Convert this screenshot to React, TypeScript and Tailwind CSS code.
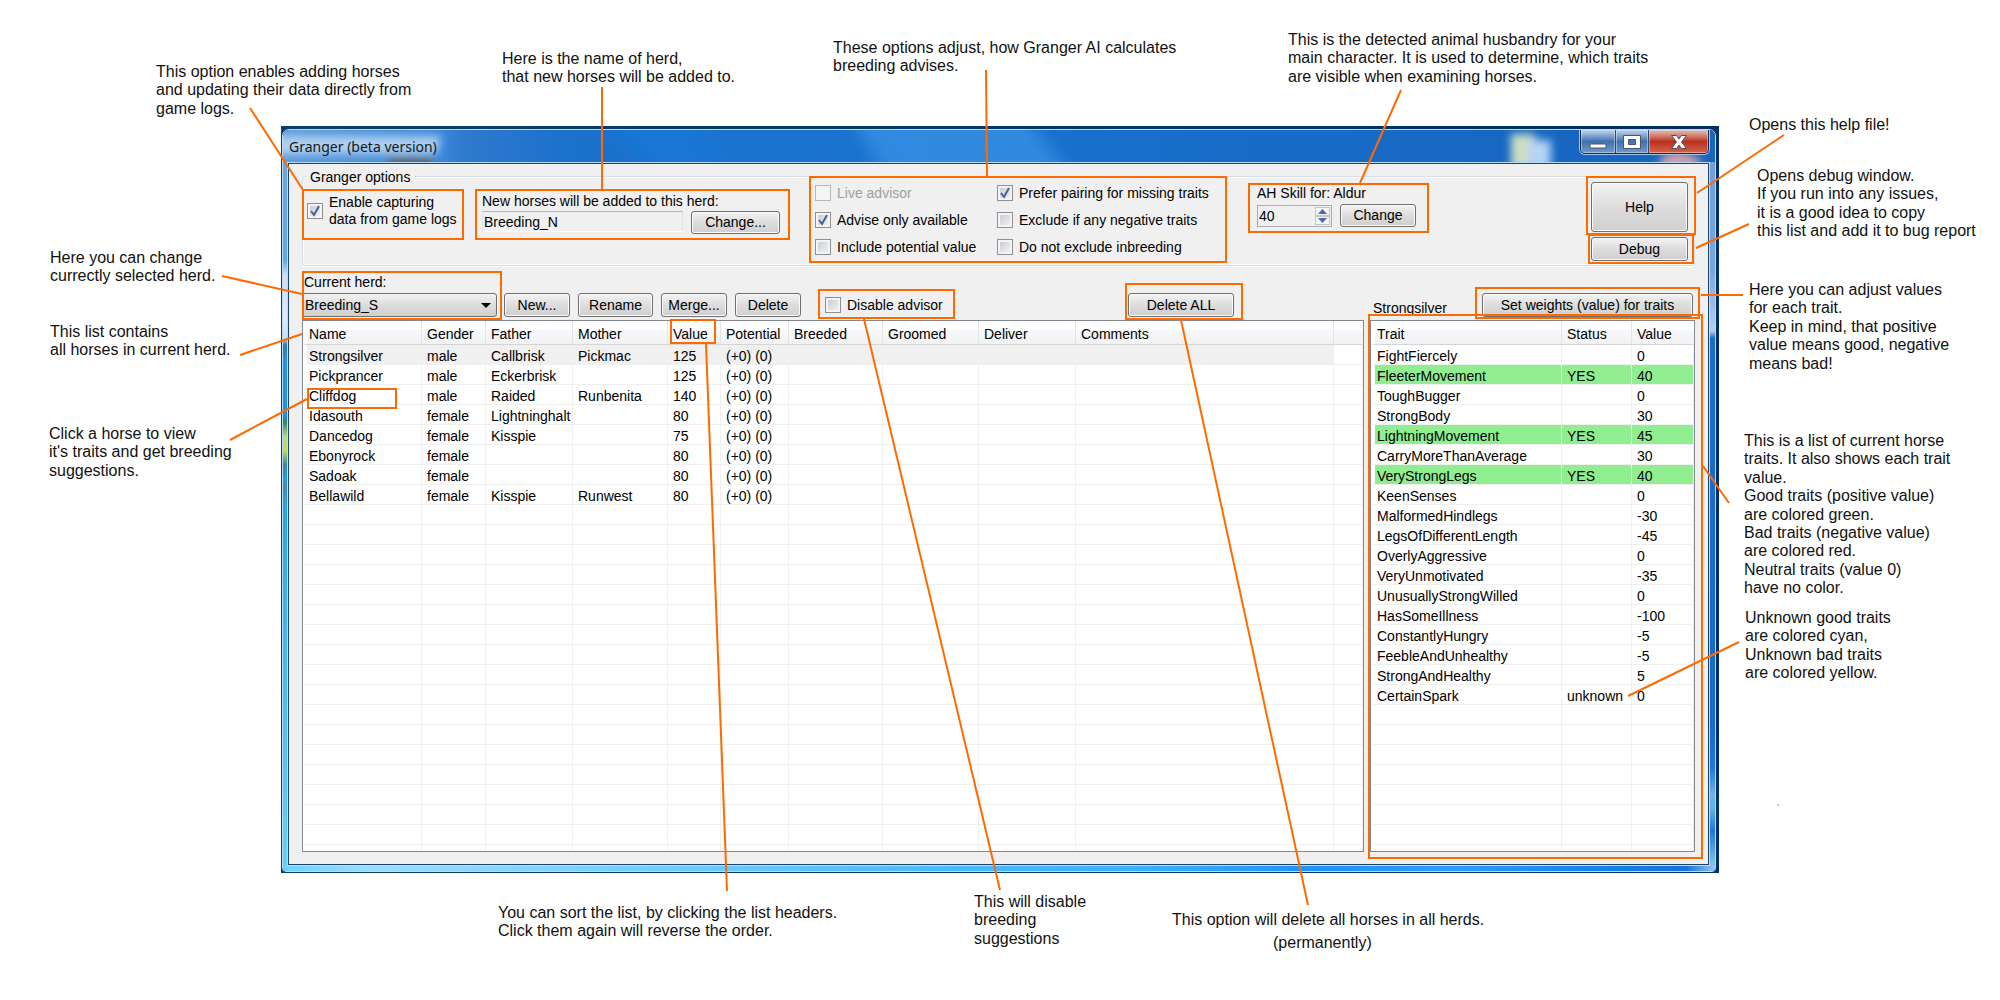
import React, { useId, useState } from "react";

const horses = [
  ["Strongsilver", "male", "Callbrisk", "Pickmac", "125"],
  ["Pickprancer", "male", "Eckerbrisk", "", "125"],
  ["Cliffdog", "male", "Raided", "Runbenita", "140"],
  ["Idasouth", "female", "Lightninghalt", "", "80"],
  ["Dancedog", "female", "Kisspie", "", "75"],
  ["Ebonyrock", "female", "", "", "80"],
  ["Sadoak", "female", "", "", "80"],
  ["Bellawild", "female", "Kisspie", "Runwest", "80"],
].map((row) => [...row, "(+0) (0)", "", "", "", "", ""]);

const horseColumns = [
  { name: "Name", width: "w-[119px]" },
  { name: "Gender", width: "w-[64px]" },
  { name: "Father", width: "w-[87px]" },
  { name: "Mother", width: "w-[95px]" },
  { name: "Value", width: "w-[53px]" },
  { name: "Potential", width: "w-[68px]" },
  { name: "Breeded", width: "w-[94px]" },
  { name: "Groomed", width: "w-[96px]" },
  { name: "Deliver", width: "w-[97px]" },
  { name: "Comments", width: "w-[258px]" },
  { name: "", width: "" },
];

const traits = [
  ["FightFiercely", "", "0"],
  ["FleeterMovement", "YES", "40"],
  ["ToughBugger", "", "0"],
  ["StrongBody", "", "30"],
  ["LightningMovement", "YES", "45"],
  ["CarryMoreThanAverage", "", "30"],
  ["VeryStrongLegs", "YES", "40"],
  ["KeenSenses", "", "0"],
  ["MalformedHindlegs", "", "-30"],
  ["LegsOfDifferentLength", "", "-45"],
  ["OverlyAggressive", "", "0"],
  ["VeryUnmotivated", "", "-35"],
  ["UnusuallyStrongWilled", "", "0"],
  ["HasSomeIllness", "", "-100"],
  ["ConstantlyHungry", "", "-5"],
  ["FeebleAndUnhealthy", "", "-5"],
  ["StrongAndHealthy", "", "5"],
  ["CertainSpark", "unknown", "0"],
];

const traitColumns = [
  { name: "Trait", width: "w-[191px]" },
  { name: "Status", width: "w-[70px]" },
  { name: "Value", width: "" },
];

const VISIBLE_ROWS = 25;

function Button({ className = "", children }: { className?: string; children: React.ReactNode }) {
  return (
    <button
      type="button"
      className={`shrink-0 whitespace-nowrap rounded-[3px] border border-[#707070] bg-linear-to-b from-[#f3f3f3] via-[#dddddd] via-50% to-[#cfcfcf] text-center shadow-[inset_0_0_0_1px_#fafafa] hover:border-[#3c7fb1] ${className}`}
    >
      {children}
    </button>
  );
}

function CheckBox({
  checked = false,
  disabled = false,
  className = "",
  children,
}: {
  checked?: boolean;
  disabled?: boolean;
  className?: string;
  children: React.ReactNode;
}) {
  return (
    <label className={`flex items-center gap-1.5 whitespace-nowrap ${disabled ? "text-[#a0a0a0]" : ""} ${className}`}>
      <span className="grid size-4 shrink-0">
        <input
          type="checkbox"
          defaultChecked={checked}
          disabled={disabled}
          className="peer col-start-1 row-start-1 size-4 appearance-none border border-[#8e8f8f] bg-linear-to-br from-[#c3c8d2] to-[#f6f6f6] shadow-[inset_0_0_0_2px_#f4f4f4] disabled:border-[#b8b8b8] disabled:from-[#f4f4f4]"
        />
        <svg viewBox="0 0 16 16" className="pointer-events-none invisible col-start-1 row-start-1 size-4 peer-checked:visible">
          <path d="M4 8 L7 12 L12 3" fill="none" stroke="#4a5f97" strokeWidth="2" />
        </svg>
      </span>
      <span>{children}</span>
    </label>
  );
}

function ListView({
  columns,
  rows,
  rowTone,
  label,
}: {
  columns: { name: string; width: string }[];
  rows: string[][];
  rowTone: (row: string[], index: number) => string;
  label: string;
}) {
  const filled = [...rows, ...Array.from({ length: VISIBLE_ROWS - rows.length }, () => columns.map(() => ""))];
  return (
    <div className="border border-[#828790] bg-white">
      <table aria-label={label} className="w-full table-fixed border-separate border-spacing-0 text-left">
        <thead>
          <tr className="h-6">
            {columns.map((c, i) => (
              <th
                key={i}
                className={`group border-b border-r border-b-[#d5d5d5] border-r-[#e3e4e6] bg-linear-to-b from-white from-40% via-[#f7f8fa] via-40% to-[#f1f2f4] p-0 font-normal first:border-l-4 first:border-l-white last:border-r-transparent ${c.width}`}
              >
                <button type="button" className="w-full pl-[5px] pt-0.5 text-left leading-5 group-first:pl-0.5">
                  {c.name}
                </button>
              </th>
            ))}
          </tr>
        </thead>
        <tbody>
          {filled.map((row, r) => (
            <tr key={r} className={`h-5 ${rowTone(row, r)}`}>
              {row.map((cell, i) => (
                <td
                  key={i}
                  className="whitespace-nowrap border-b border-r border-[#f0f0f0] p-0 pl-[5px] pt-1 leading-[15px] first:border-l-4 first:border-l-white first:pl-0.5"
                >
                  {cell}
                </td>
              ))}
            </tr>
          ))}
          <tr className="h-1.5">
            {columns.map((_, i) => (
              <td key={i} className="border-r border-[#f0f0f0] p-0" />
            ))}
          </tr>
        </tbody>
      </table>
    </div>
  );
}

function CaptionButtons() {
  return (
    <div className="flex h-6 shrink-0 overflow-hidden rounded-b-[5px] border border-t-0 border-[#10284c] shadow-[0_0_0_1px_#a9c6e6]">
      <button
        type="button"
        aria-label="Minimize"
        className="w-[35px] border-r border-[#2b466e] bg-linear-to-b from-[#a9c4e3] from-10% via-[#3f71ad] via-50% to-[#6f9ccf] shadow-[inset_0_0_0_1px_#ffffff66]"
      >
        <svg viewBox="0 0 35 23" className="block h-[23px] w-[35px]">
          <rect x="9" y="14" width="16" height="4" rx="1" fill="#fff" stroke="#4a5568" />
        </svg>
      </button>
      <button
        type="button"
        aria-label="Maximize"
        className="w-[33px] border-r border-[#2b466e] bg-linear-to-b from-[#a9c4e3] from-10% via-[#3f71ad] via-50% to-[#6f9ccf] shadow-[inset_0_0_0_1px_#ffffff66]"
      >
        <svg viewBox="0 0 33 23" className="block h-[23px] w-[33px]">
          <path d="M7.500 5.500h17v13h-17z M12.500 9.500v5h7v-5z" fill="#fff" fillRule="evenodd" stroke="#4a5568" />
        </svg>
      </button>
      <button
        type="button"
        aria-label="Close"
        className="w-[59px] bg-linear-to-b from-[#dda79f] from-10% via-[#b8301c] via-50% to-[#d8604a] shadow-[inset_0_0_0_1px_#ffffff66]"
      >
        <svg viewBox="0 0 59 23" className="block h-[23px] w-[59px]">
          <path
            d="M22.500 5.500h5l2.500 3.500 2.500-3.500h5l-5 6.500 5 6.500h-5l-2.500-3.500-2.500 3.500h-5l5-6.500z"
            fill="#fff"
            stroke="#4f4f5c"
          />
        </svg>
      </button>
    </div>
  );
}

function TitleBar() {
  return (
    <header className="relative flex h-8 items-start justify-between overflow-hidden bg-linear-to-r from-[#5e9bdc] from-0% via-[#1b78d8] via-20% to-[#1664bd]">
      <svg className="absolute inset-0 h-full w-full" aria-hidden="true">
        <defs>
          <filter id="soft" x="-30%" y="-60%" width="160%" height="220%">
            <feGaussianBlur stdDeviation="4" />
          </filter>
          <filter id="softer" x="-30%" y="-60%" width="160%" height="220%">
            <feGaussianBlur stdDeviation="8" />
          </filter>
        </defs>
        <g filter="url(#softer)">
          <path d="M170 -30h130l90 90H170z" fill="#1661b8" opacity=".35" />
          <path d="M400 -30h160l70 90H450z" fill="#1a70c8" opacity=".4" />
          <path d="M560 -30h170l70 90H610z" fill="#3d97e6" opacity=".65" />
        </g>
        <g filter="url(#soft)">
          <path d="M-10 6h168l-4 18H-10z" fill="#c9dff5" opacity=".8" />
          <path d="M105 28h45v14h-45z" fill="#5b5f58" />
        </g>
      </svg>
      <svg className="absolute right-0 top-0 h-full w-[220px]" viewBox="0 0 220 32" aria-hidden="true">
        <g filter="url(#soft)">
          <path d="M16 4h24v34H16z" fill="#cddfc4" />
          <path d="M34 10h22v28H34z" fill="#b5d3f6" />
          <path d="M165 28q20-12 40 2v8h-40z" fill="#d8a3a8" />
        </g>
      </svg>
      <h1 className="relative pl-1.5 font-['Noto_Sans','Open_Sans',sans-serif] text-sm leading-[33px] text-[#101820]">
        Granger (beta version)
      </h1>
      <div className="relative pr-1.5">
        <CaptionButtons />
      </div>
    </header>
  );
}

function OptionsGroup() {
  const herdId = useId();
  const skillId = useId();
  const [skill, setSkill] = useState(40);
  return (
    <fieldset className="relative mt-3 flex h-[90px] items-start rounded-[3px] border border-[#d5dfe5] pl-1 pr-1.5 shadow-[inset_0_0_0_1px_#fbfbfb,0_1px_0_#fbfbfb]">
      <legend className="absolute -top-[9px] left-[3px] bg-[#f0f0f0] px-1 leading-[18px]">Granger options</legend>
      <CheckBox checked className="mt-[17px] w-[175px] shrink-0">
        Enable capturing
        <br />
        data from game logs
      </CheckBox>

      <div className="mt-4 shrink-0">
        <label htmlFor={herdId} className="block">New horses will be added to this herd:</label>
        <div className="mt-px flex gap-2">
          <input
            id={herdId}
            readOnly
            defaultValue="Breeding_N"
            className="h-[21px] w-[201px] border border-[#e2e3e3] border-b-white border-t-[#b5b5b5] bg-transparent px-px"
          />
          <Button className="h-[23px] w-[89px]">Change...</Button>
        </div>
      </div>

      <div className="ml-[35px] mt-1.5 grid shrink-0 grid-cols-[182px_200px] gap-y-[7px]">
        <CheckBox disabled className="h-5">Live advisor</CheckBox>
        <CheckBox checked className="h-5">Prefer pairing for missing traits</CheckBox>
        <CheckBox checked className="h-5">Advise only available</CheckBox>
        <CheckBox className="h-5">Exclude if any negative traits</CheckBox>
        <CheckBox className="h-5">Include potential value</CheckBox>
        <CheckBox className="h-5">Do not exclude inbreeding</CheckBox>
      </div>

      <div className="ml-[60px] mt-2 shrink-0">
        <label htmlFor={skillId} className="block">AH Skill for: Aldur</label>
        <div className="mt-0.5 flex items-end gap-2">
          <div className="flex h-[22px] w-[75px] border border-[#abadb3] p-px">
            <input
              id={skillId}
              inputMode="numeric"
              value={skill}
              onChange={(e) => setSkill(Number(e.target.value) || 0)}
              className="w-0 flex-1 bg-transparent"
            />
            <div className="flex w-[15px] flex-col">
              <button
                type="button"
                aria-label="Increase skill"
                onClick={() => setSkill(skill + 1)}
                className="grid flex-1 place-items-center border border-[#c3c5c9] bg-[#f6f6f6]"
              >
                <svg viewBox="0 0 9 5" className="h-[5px] w-[9px]"><path d="M0 5L4.500 0L9 5z" fill="#5068a8" /></svg>
              </button>
              <button
                type="button"
                aria-label="Decrease skill"
                onClick={() => setSkill(skill - 1)}
                className="grid flex-1 place-items-center border border-[#c3c5c9] bg-[#f6f6f6]"
              >
                <svg viewBox="0 0 9 5" className="h-[5px] w-[9px]"><path d="M0 0L4.500 5L9 0z" fill="#5068a8" /></svg>
              </button>
            </div>
          </div>
          <Button className="h-[23px] w-[76px]">Change</Button>
        </div>
      </div>

      <div className="ml-auto mt-[5px] flex w-[97px] shrink-0 flex-col gap-[5px]">
        <Button className="h-[50px]">Help</Button>
        <Button className="h-6">Debug</Button>
      </div>
    </fieldset>
  );
}

function HerdPanel() {
  const id = useId();
  return (
    <section className="min-w-0 flex-1">
      <div className="flex h-[54px] items-end gap-2 pb-[3px]">
        <div className="-mr-px w-[195px] shrink-0">
          <label htmlFor={id} className="mb-0.5 block pl-0.5">Current herd:</label>
          <div className="relative">
            <select
              id={id}
              className="block h-6 w-full appearance-none rounded-[3px] border border-[#707070] bg-linear-to-b from-[#f3f3f3] via-[#dddddd] via-50% to-[#cfcfcf] pl-0.5"
            >
              <option>Breeding_S</option>
              <option>Breeding_N</option>
            </select>
            <svg viewBox="0 0 10 5" className="pointer-events-none absolute right-1.5 top-[10px] h-[5px] w-[10px]">
              <path d="M0 0h10L5 5z" />
            </svg>
          </div>
        </div>
        <Button className="h-6 w-[66px]">New...</Button>
        <Button className="h-6 w-[75px]">Rename</Button>
        <Button className="h-6 w-[66px]">Merge...</Button>
        <Button className="h-6 w-[66px]">Delete</Button>
        <CheckBox className="ml-4 h-6">Disable advisor</CheckBox>
        <Button className="ml-auto mr-[130px] h-6 w-[106px]">Delete ALL</Button>
      </div>
      <ListView
        label="Horses in herd"
        columns={horseColumns}
        rows={horses}
        rowTone={(_, i) => (i === 0 ? "[&>td:not(:last-child)]:bg-[#f0f0f0]" : "")}
      />
    </section>
  );
}

function TraitPanel() {
  return (
    <section className="w-[325px] shrink-0">
      <div className="flex h-[54px] items-end justify-between pb-[3px] pl-[3px] pr-0.5">
        <h2>Strongsilver</h2>
        <Button className="h-6 w-[211px]">Set weights (value) for traits</Button>
      </div>
      <ListView
        label="Traits of Strongsilver"
        columns={traitColumns}
        rows={traits}
        rowTone={(row) => (row[1] === "YES" ? "[&>td]:bg-[#90ee90] [&>td]:bg-clip-padding" : "")}
      />
    </section>
  );
}

function GrangerWindow() {
  return (
    <main className="mx-[281px] bg-linear-to-r from-[#0b3f6e] to-[#00306a] pb-px pl-px pr-[3px] pt-[3px] font-['Liberation_Sans',Arial,sans-serif] text-sm leading-[17px] text-black">
      <div className="overflow-hidden rounded-t-[7px] rounded-b-[4px] border border-[#b9dcf7]">
        <TitleBar />
        <div className="flex">
          <div className="w-1 bg-linear-[180deg,#6aa5e6_0%,#62a8ec_14%,#cfdcf6_16%,#e0ecfa_22%,#c4e2f5_25%,#3a78ac_26%,#2093e6_28%,#1e93e3_36%,#2f8a5e_37%,#b8d887_39%,#bcdc58_41%,#3a86a0_43%,#1da0e6_45%,#4a88b0_46%,#24a4ea_49%,#3fb4f2_65%,#63cffc_100%]" />
          <div className="min-w-0 flex-1 border border-[#b9dcf7]">
            <div className="flow-root border border-[#1d4468] bg-[#f0f0f0] px-[13px] pb-3">
              <OptionsGroup />
              <div className="flex gap-1.5">
                <HerdPanel />
                <TraitPanel />
              </div>
            </div>
          </div>
          <div className="w-[5px] bg-linear-[180deg,#6f9fdc_0%,#78a5de_15%,#b5cdf0_24%,#1a6dd0_25%,#166bcf_80%,#1b78de_86%,#6fb6ea_90%,#5db0e8_92%,#1879e0_95%,#8cc5e8_100%]" />
        </div>
        <div className="h-[5px] bg-linear-[90deg,#6fd2ff_0%,#9ddcff_6%,#7fd2ff_20%,#4dbcff_45%,#3bb0ff_60%,#1f93f7_72%,#2f9bff_82%,#1787f0_90%,#1573dc_98%,#9cc8e8_100%]" />
      </div>
    </main>
  );
}

const notes: { place: string; lines: string[][] }[] = [
  { place: "left-[156px] top-[63px]", lines: [["This option enables adding horses", "and updating their data directly from"], ["game logs."]] },
  { place: "left-[502px] top-[50px]", lines: [["Here is the name of herd,", "that new horses will be added to."]] },
  { place: "left-[833px] top-[39px]", lines: [["These options adjust, how Granger AI calculates", "breeding advises."]] },
  { place: "left-[1288px] top-[31px]", lines: [["This is the detected animal husbandry for your", "main character. It is used to determine, which traits"], ["are visible when examining horses."]] },
  { place: "left-[1749px] top-[116px]", lines: [["Opens this help file!"]] },
  { place: "left-[1757px] top-[167px]", lines: [["Opens debug window.", "If you run into any issues,"], ["it is a good idea to copy", "this list and add it to bug report"]] },
  { place: "left-[1749px] top-[281px]", lines: [["Here you can adjust values", "for each trait."], ["Keep in mind, that positive", "value means good, negative"], ["means bad!"]] },
  { place: "left-[1744px] top-[432px]", lines: [["This is a list of current horse", "traits. It also shows each trait"], ["value.", "Good traits (positive value)"], ["are colored green.", "Bad traits (negative value)", "are colored red."], ["Neutral traits (value 0)", "have no color."]] },
  { place: "left-[1745px] top-[609px]", lines: [["Unknown good traits", "are colored cyan,"], ["Unknown bad traits", "are colored yellow."]] },
  { place: "left-[50px] top-[249px]", lines: [["Here you can change", "currectly selected herd."]] },
  { place: "left-[50px] top-[323px]", lines: [["This list contains", "all horses in current herd."]] },
  { place: "left-[49px] top-[425px]", lines: [["Click a horse to view", "it's traits and get breeding"], ["suggestions."]] },
  { place: "left-[498px] top-[904px]", lines: [["You can sort the list, by clicking the list headers.", "Click them again will reverse the order."]] },
  { place: "left-[974px] top-[893px]", lines: [["This will disable", "breeding"], ["suggestions"]] },
  { place: "left-[1172px] top-[911px]", lines: [["This option will delete all horses in all herds."]] },
  { place: "left-[1273px] top-[934px]", lines: [["(permanently)"]] },
];

// Highlight frames as [left, top, right, bottom].
const frames = [
  [302, 189, 464, 240],
  [475, 189, 790, 240],
  [809, 176, 1227, 263],
  [1248, 183, 1429, 233],
  [1586, 176, 1696, 235],
  [1588, 234, 1694, 264],
  [302, 271, 502, 320],
  [670, 319, 716, 344],
  [307, 388, 397, 409],
  [818, 289, 955, 319],
  [1125, 283, 1243, 320],
  [1475, 287, 1700, 319],
  [1368, 314, 1703, 859],
];

// Leader lines as [x1, y1, x2, y2].
const leaders = [
  [250, 108, 303, 190],
  [602, 87, 602, 190],
  [986, 70, 987, 176],
  [1401, 90, 1360, 183],
  [1784, 135, 1697, 193],
  [1749, 224, 1696, 248],
  [1701, 295, 1743, 295],
  [222, 276, 302, 294],
  [240, 355, 302, 334],
  [230, 440, 307, 399],
  [706, 344, 727, 891],
  [864, 319, 1000, 890],
  [1181, 320, 1308, 905],
  [1703, 466, 1729, 503],
  [1628, 696, 1739, 642],
];

export default function App() {
  return (
    <div className="relative min-h-screen bg-white pt-[126px]">
      <GrangerWindow />
      {notes.map((note) => (
        <div
          key={note.place}
          className={`absolute space-y-px whitespace-nowrap font-['Liberation_Sans',Arial,sans-serif] text-base leading-[18px] text-[#111] ${note.place}`}
        >
          {note.lines.map((group, i) => (
            <p key={i}>
              {group.map((line) => (
                <span key={line} className="block">{line}</span>
              ))}
            </p>
          ))}
        </div>
      ))}
      <svg className="pointer-events-none absolute inset-0 h-full w-full" fill="none" stroke="#ff6a00" strokeWidth="2" aria-hidden="true">
        {frames.map(([l, t, r, b]) => (
          <rect key={`${l}-${t}`} x={l + 1} y={t + 1} width={r - l - 2} height={b - t - 2} />
        ))}
        {leaders.map(([x1, y1, x2, y2]) => (
          <line key={`${x1}-${y1}`} x1={x1} y1={y1} x2={x2} y2={y2} />
        ))}
        <rect x="1777" y="804" width="2" height="2" fill="#ffb98a" stroke="none" />
      </svg>
    </div>
  );
}
